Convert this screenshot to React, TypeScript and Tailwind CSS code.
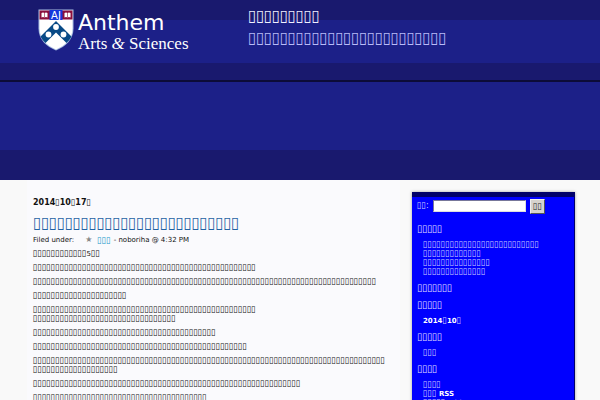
import type { ReactNode } from 'react';

const paragraphs: string[][] = [
  ['▯'.repeat(50)],
  ['▯'.repeat(77)],
  ['▯'.repeat(21)],
  ['▯'.repeat(50), '▯'.repeat(32)],
  ['▯'.repeat(41)],
  ['▯'.repeat(48)],
  ['▯'.repeat(79), '▯'.repeat(19)],
  ['▯'.repeat(60)],
  ['▯'.repeat(39)],
];

const boxFont = "font-['DejaVu_Sans_Condensed','DejaVu_Sans',sans-serif]";

function Crest() {
  return (
    <svg viewBox="0 0 36 42" className="h-[42px] w-9 shrink-0" aria-hidden="true">
      <path d="M.5.5h35v19c0 11-8 18-17.5 22C8.5 37.5.5 30.5.5 19.5z" fill="#a9bfe2" />
      <path d="M1.5 1.5h33v18c0 10-7 17-16.5 21C8.500 36.500 1.500 29.500 1.500 19.500z" fill="#fff" />
      <path d="M1.5 1.5h33v9h-33z" fill="#8b0f3c" />
      <path d="M11.5 1h13v10h-13z" fill="#1536dd" />
      <path d="M3.5 4q1.5-.8 3 0 1.5-.8 3 0v4.5q-1.5-.8-3 0-1.5-.8-3 0zM26.5 4q1.5-.8 3 0 1.5-.8 3 0v4.5q-1.5-.8-3 0-1.5-.8-3 0z" fill="#fff" />
      <path d="M6.5 4v4.5M29.5 4v4.5" stroke="#8b0f3c" strokeWidth=".6" />
      <path d="M18 12 33.5 27.5q-2 4-5 6.500L18 23.500 7.500 34q-3-2.500-5-6.500z" fill="#084a86" />
      <circle cx="18" cy="18" r="2.9" fill="#fff" />
      <circle cx="10.5" cy="25.5" r="2.9" fill="#fff" />
      <circle cx="25.5" cy="25.5" r="2.9" fill="#fff" />
      <text x="18" y="9.5" textAnchor="middle" fontFamily="DejaVu Sans" fontSize="10" fill="#fff">AJ</text>
    </svg>
  );
}

function Widget({ title, children }: { title: string; children?: ReactNode }) {
  return (
    <section>
      <h2 className="text-[10px] leading-[12px] text-[#e2e2ff]">{title}</h2>
      {children && (
        <ul className="mt-[5px] pb-px pl-[6px] text-[9px] leading-[9px] text-[#d0d0ff]">{children}</ul>
      )}
    </section>
  );
}

function Item({ children }: { children: ReactNode }) {
  return (
    <li className="h-[9px] whitespace-nowrap">
      <a href="#">{children}</a>
    </li>
  );
}

function Latin({ children }: { children: ReactNode }) {
  return <span className="font-['DejaVu_Sans',sans-serif] text-[7px] font-bold text-white">{children}</span>;
}

export default function App() {
  return (
    <div className={`h-screen overflow-hidden bg-[#f9f9f9] ${boxFont}`}>
      <header>
        <div className="flex h-[82px] border-b-2 border-[#0c0c38] bg-[linear-gradient(#19196e_20px,#1c2088_20px,#1c2088_63px,#19196e_63px)] pl-[38px]">
          <a href="#" className="flex w-[210px] gap-1 pt-[9px] text-white">
            <Crest />
            <span className="flex flex-col whitespace-nowrap pt-px">
              <span className="font-['DejaVu_Sans',sans-serif] text-[22px] leading-[26px]">Anthem</span>
              <span className="font-['Liberation_Serif',serif] text-[17px] leading-[16px]">
                Arts <i>&amp;</i> Sciences
              </span>
            </span>
          </a>
          <div className="pt-[6px]">
            <h1 className="text-[16px] leading-[20px] font-bold text-[#f0f0ff]">{'▯'.repeat(9)}</h1>
            <p className="mt-[2px] text-[16px] leading-[20px] text-[#b9bcf8]">{'▯'.repeat(25)}</p>
          </div>
        </div>
        <div className="h-[98px] border-b-[30px] border-[#19196e] bg-[#1c2088]" />
      </header>
      <div className="flex items-start pr-[25px] pl-[27px]">
        <main className="min-w-0 flex-1 bg-[#fafafd] pt-[16px] pl-[6px] text-[9px] leading-[9px] text-[#111]">
          <p className="text-[9px] leading-[12px]">
            <span className="font-['DejaVu_Sans',sans-serif] text-[8px] font-bold">2014</span>▯
            <span className="font-['DejaVu_Sans',sans-serif] text-[8px] font-bold">10</span>▯
            <span className="font-['DejaVu_Sans',sans-serif] text-[8px] font-bold">17</span>▯
          </p>
          <h2 className="mt-1 text-[16px] leading-[20px]">
            <a href="#" className="text-[#1f62a3]">{'▯'.repeat(26)}</a>
          </h2>
          <p className="mt-px flex h-[12px] items-center font-['DejaVu_Sans',sans-serif] text-[7px] leading-[12px]">
            Filed under:
            <span className="mr-[5px] ml-[11px] text-[8px] text-[#888]">★</span>
            <a href="#" className="mr-[3px] font-['DejaVu_Sans_Condensed',sans-serif] text-[9px] text-[#1496c8]">▯▯▯</a>
            - noboriha @ 4:32 PM
          </p>
          <div className="mt-[3px] flex flex-col gap-[5px]">
            <p className="h-[9px]">
              {'▯'.repeat(12)}
              <span className="font-['DejaVu_Sans',sans-serif] text-[7px]">5</span>▯▯
            </p>
            {paragraphs.map((lines, i) => (
              <p key={i}>
                {lines.map((line, j) => (
                  <span key={j} className="block h-[9px] whitespace-nowrap">{line}</span>
                ))}
              </p>
            ))}
          </div>
        </main>
        <aside className="mt-[12px] ml-[12px] flex w-[163px] shrink-0 flex-col gap-[5px] border-t-[5px] border-r border-[#00006a] bg-[#0000ff] px-[5px] pt-px pb-2 shadow-[0_0_3px_rgba(0,0,0,0.35)]">
          <form className="mb-1 flex h-4 items-center text-[9px] text-[#d0d0ff]" onSubmit={(e) => e.preventDefault()}>
            <label htmlFor="search" className="w-[16px] whitespace-nowrap">▯▯:</label>
            <input id="search" type="text" className="h-[12px] w-[93px] border border-[#77779a] border-r-[#ddd] border-b-[#ddd] bg-white px-1 text-[8px] text-black" />
            <button type="submit" className="ml-1 h-[15px] w-[15px] border border-[#eee] border-r-[#555] border-b-[#555] bg-[#d6d3ce] text-[9px] leading-[12px] text-[#222]">
              ▯▯
            </button>
          </form>
          <Widget title={'▯'.repeat(5)}>
            <Item>{'▯'.repeat(26)}</Item>
            <Item>{'▯'.repeat(13)}</Item>
            <Item>{'▯'.repeat(15)}</Item>
            <Item>{'▯'.repeat(14)}</Item>
          </Widget>
          <Widget title={'▯'.repeat(7)} />
          <Widget title={'▯'.repeat(5)}>
            <Item><Latin>2014</Latin>▯<Latin>10</Latin>▯</Item>
          </Widget>
          <Widget title={'▯'.repeat(5)}>
            <Item>▯▯▯</Item>
          </Widget>
          <Widget title={'▯'.repeat(4)}>
            <Item>▯▯▯▯</Item>
            <Item>▯▯▯ <Latin>RSS</Latin></Item>
            <Item>▯▯▯▯▯ <Latin>RSS</Latin></Item>
          </Widget>
        </aside>
      </div>
    </div>
  );
}
